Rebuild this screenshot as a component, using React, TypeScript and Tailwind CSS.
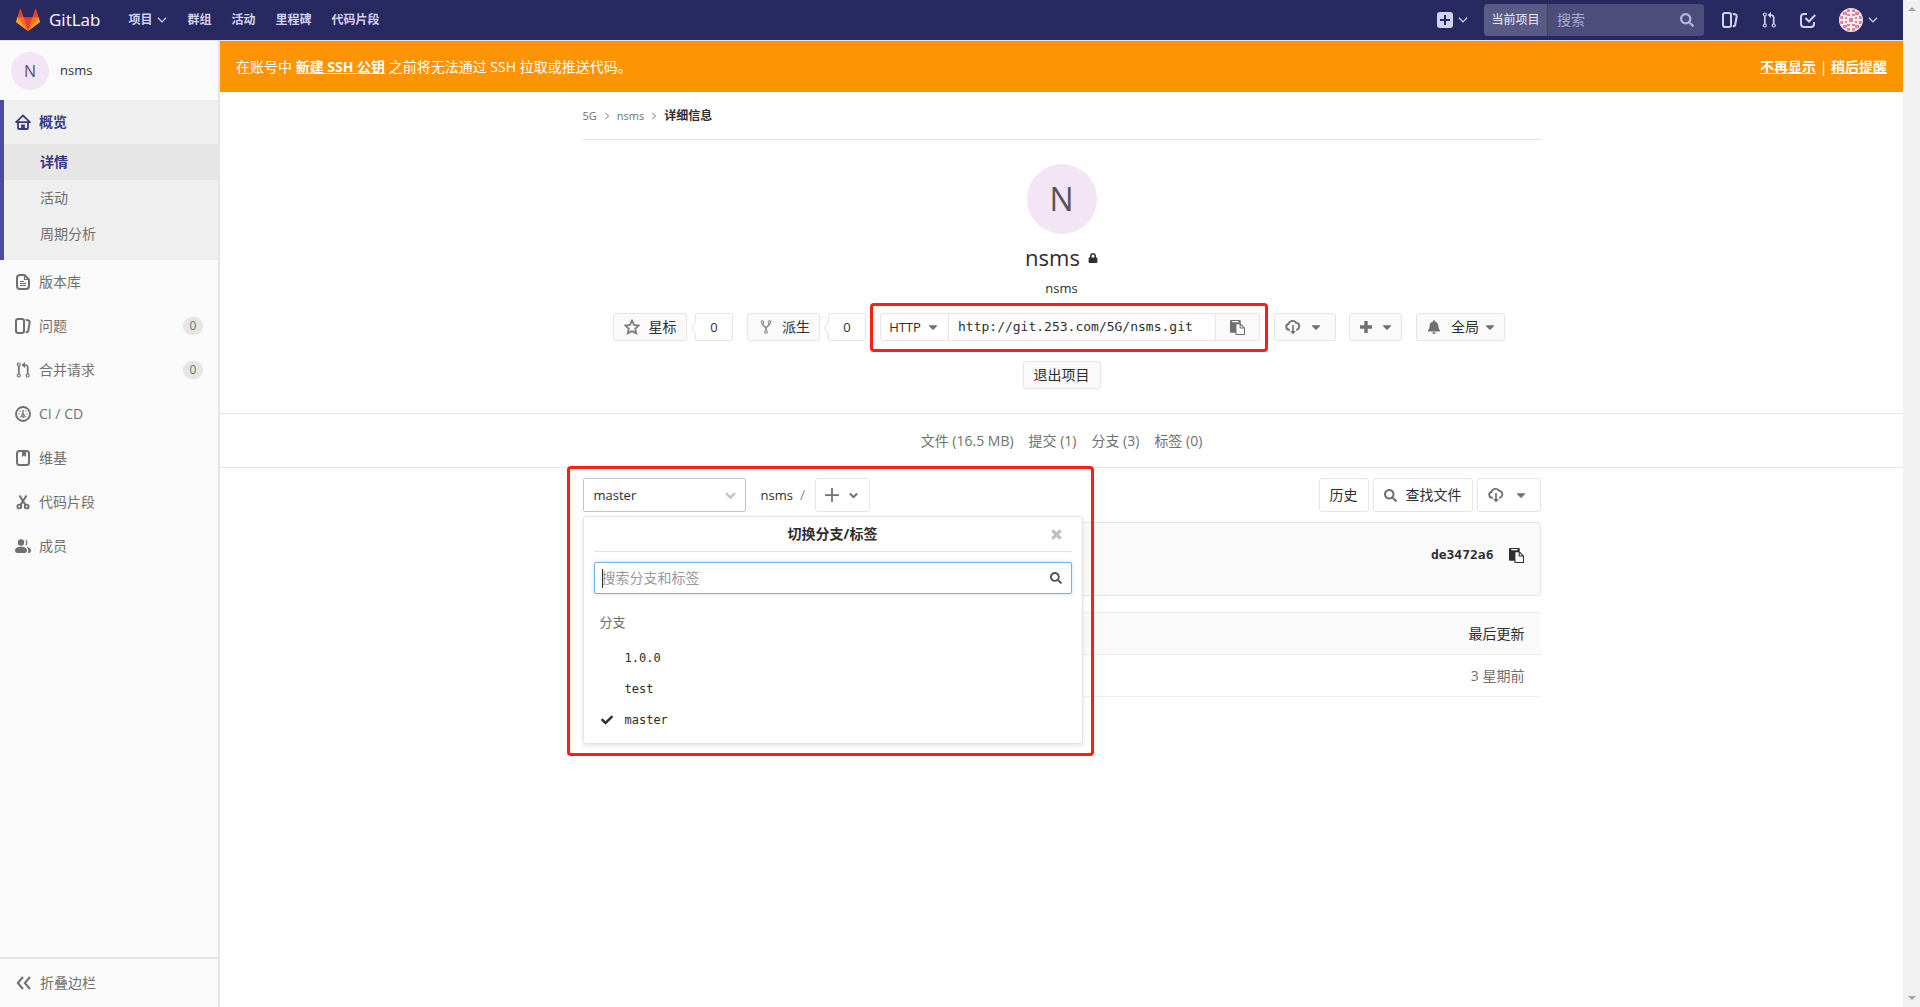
import type { ReactNode } from "react";
import { FaBell, FaCaretDown, FaCheck, FaLock, FaSearch } from "react-icons/fa";

function Svg({ children, className = "size-4" }: { children: ReactNode; className?: string }) {
  return (
    <svg viewBox="0 0 16 16" fill="none" stroke="currentColor" strokeWidth="2" className={className} aria-hidden="true">
      {children}
    </svg>
  );
}

const Chevron = ({ className = "size-[10px]" }: { className?: string }) => (
  <Svg className={className}>
    <path d="M1.500 4.500 8 11l6.500-6.500" />
  </Svg>
);

const BoldChevron = ({ className }: { className: string }) => (
  <Svg className={className}>
    <path d="M1.500 4.500 8 11l6.500-6.500" strokeWidth="3.500" />
  </Svg>
);

const HomeIcon = () => (
  <Svg>
    <path d="M.5 8.700 8 1.500l7.500 7.200M1 8.200h14M3 8.500v5.500a1 1 0 0 0 1 1h8a1 1 0 0 0 1-1V8.500M7 15v-3.500h2V15" strokeWidth="1.800" />
  </Svg>
);

const DocIcon = () => (
  <Svg>
    <path d="M9.500 1H5a3 3 0 0 0-3 3v8a3 3 0 0 0 3 3h6a3 3 0 0 0 3-3V5.500z" strokeLinejoin="round" />
    <path d="M9.500 1v4.500H14M5 7.500h4M5 9.500h6M5 11.500h6" strokeWidth="1.200" />
  </Svg>
);

const IssuesIcon = () => (
  <Svg>
    <g fill="currentColor" stroke="none" fillRule="evenodd">
      <path d="M10.458 15.012l.311.055a3 3 0 0 0 3.476-2.433l1.389-7.879A3 3 0 0 0 13.200 1.280L11.230.933a3.002 3.002 0 0 0-.824-.031c.364.590.580 1.280.593 2.020l1.854.328a1 1 0 0 1 .811 1.158l-1.389 7.879a1 1 0 0 1-1.158.810l-.118-.020a3.980 3.980 0 0 1-.541 1.935z" />
      <path d="M3 0h4a3 3 0 0 1 3 3v10a3 3 0 0 1-3 3H3a3 3 0 0 1-3-3V3a3 3 0 0 1 3-3zm0 2a1 1 0 0 0-1 1v10a1 1 0 0 0 1 1h4a1 1 0 0 0 1-1V3a1 1 0 0 0-1-1H3z" />
    </g>
  </Svg>
);

const MergeIcon = () => (
  <Svg>
    <circle cx="3.800" cy="2.500" r="1.500" strokeWidth="1.200" />
    <circle cx="3.800" cy="13.500" r="1.500" strokeWidth="1.200" />
    <circle cx="12.700" cy="13.500" r="1.500" strokeWidth="1.200" />
    <path d="M3.800 4v8M12.700 12V5.500a2.500 2.500 0 0 0-2.500-2.500H8.500" strokeWidth="1.700" />
    <path d="M10 0v6L6.500 3z" fill="currentColor" stroke="none" />
  </Svg>
);

const GaugeIcon = () => (
  <Svg>
    <circle cx="8" cy="8" r="7" strokeWidth="1.900" />
    <circle cx="8" cy="9.700" r="1.300" strokeWidth="1.400" />
    <path d="M8 4v4.500" strokeWidth="1.400" />
    <path d="M3.300 8h1.200M11.500 8h1.200M4.700 4.700l.8.8M11.300 4.700l-.8.8M4.700 11.300l.8-.8M11.300 11.300l-.8-.8" strokeWidth="1.100" />
  </Svg>
);

const WikiIcon = () => (
  <Svg>
    <rect x="2" y="1" width="12" height="14" rx="2.500" />
    <path d="M7 1h4v6L9 5.400 7 7z" fill="currentColor" stroke="none" />
  </Svg>
);

const ScissorsIcon = () => (
  <Svg>
    <circle cx="4.300" cy="12.500" r="1.900" strokeWidth="1.900" />
    <circle cx="11.700" cy="12.500" r="1.900" strokeWidth="1.900" />
    <path d="M4.500 1.500 10.500 11M11.500 1.500 5.500 11" strokeWidth="2" />
  </Svg>
);

const MembersIcon = () => (
  <Svg>
    <g fill="currentColor" stroke="none">
      <circle cx="6" cy="4.500" r="3.200" />
      <path d="M0 12.500C0 10 2.500 8.700 6 8.700s6 1.300 6 3.800C12 14.500 10.500 15 9 15H3c-1.500 0-3-.5-3-2.500z" />
      <path d="M10 1.500a3.100 3.100 0 0 1 0 6.100 5 5 0 0 0 0-6.100zM11.500 8.700c2.700.3 4.500 1.600 4.500 3.700 0 1.900-1.200 2.600-3.200 2.600.9-2.100.6-4.600-1.300-6.300z" />
    </g>
  </Svg>
);

const TodoIcon = () => (
  <Svg>
    <path d="M7 2H4a3 3 0 0 0-3 3v7a3 3 0 0 0 3 3h7a3 3 0 0 0 3-3v-2" />
    <path d="m5.500 6 3.500 3.500L15.200 3" />
  </Svg>
);

const PlusBoxIcon = () => (
  <Svg>
    <rect width="16" height="16" rx="3" fill="currentColor" stroke="none" />
    <path d="M8 3v10M3 8h10" stroke="#292961" />
  </Svg>
);

const ForkIcon = () => (
  <Svg className="size-[14px]">
    <g strokeWidth="1.200">
      <circle cx="4" cy="2.500" r="1.500" />
      <circle cx="12" cy="2.500" r="1.500" />
      <circle cx="8" cy="13.500" r="1.500" />
      <path d="M4 4c0 3 4 2.800 4 6v2M12 4c0 3-4 2.800-4 6" strokeWidth="1.800" />
    </g>
  </Svg>
);

const StarIcon = () => (
  <Svg>
    <path d="m8 1.700 2 4.200 4.700.6-3.400 3.200.8 4.600L8 12.100l-4.100 2.200.8-4.600L1.300 6.500 6 5.900z" strokeWidth="1.900" />
  </Svg>
);

const CloudDownIcon = () => (
  <Svg>
    <path d="M4.800 10.700H4A2.900 2.900 0 0 1 3.400 5 4.300 4.300 0 0 1 11 3.600a3.700 3.700 0 0 1 1 7.100h-.8" strokeWidth="1.900" />
    <path d="M8 6v7" strokeWidth="1.600" />
    <path d="M5.200 12h5.600L8 15.500z" fill="currentColor" stroke="none" />
  </Svg>
);

const PasteIcon = () => (
  <svg viewBox="0 0 1792 1792" fill="currentColor" className="size-[15px]" aria-hidden="true">
    <path d="M768 1664h896v-640h-416q-40 0-68-28t-28-68v-416h-384v1152zm256-1440v-64q0-13-9.500-22.500t-22.500-9.500h-704q-13 0-22.500 9.500t-9.500 22.500v64q0 13 9.500 22.500t22.500 9.500h704q13 0 22.500-9.500t9.500-22.500zm256 672h299l-299-299v299zm512 128v672q0 40-28 68t-68 28h-960q-40 0-68-28t-28-68v-160h-544q-40 0-68-28t-28-68v-1344q0-40 28-68t68-28h1088q40 0 68 28t28 68v328q21 13 36 28l408 408q28 28 48 76t20 88z" />
  </svg>
);

const Tanuki = () => (
  <svg viewBox="0 0 36 36" className="size-6" aria-hidden="true">
    <path fill="#e24329" d="M2 14l9.380 9v-9l-4-12.280c-.205-.632-1.176-.632-1.380 0z" />
    <path fill="#e24329" d="M34 14l-9.380 9v-9l4-12.280c.205-.632 1.176-.632 1.380 0z" />
    <path fill="#e24329" d="M18 34.380 3 14h30z" />
    <path fill="#fc6d26" d="M18 34.380 11.380 14H2l4 11z" />
    <path fill="#fc6d26" d="M18 34.380 24.620 14H34l-4 11z" />
    <path fill="#fca326" d="M2 14L.1 20.160c-.180.565 0 1.200.5 1.560l17.420 12.660z" />
    <path fill="#fca326" d="M34 14l1.900 6.160c.180.565 0 1.200-.5 1.560L18 34.380z" />
  </svg>
);

const Identicon = () => (
  <svg viewBox="0 0 24 24" className="size-6 rounded-full" aria-hidden="true">
    <rect width="24" height="24" fill="#f9edf1" />
    <g fill="#e4809c">
      <path d="M8 1h3v3H8zM13 1h3v3h-3zM4 4h4v3H4zM16 4h4v3h-4zM1 8h3v3H1zM20 8h3v3h-3zM1 13h3v3H1zM20 13h3v3h-3zM4 17h4v3H4zM16 17h4v3h-4zM8 20h3v3H8zM13 20h3v3h-3z" />
      <path d="M8 6h3v2H8zM13 6h3v2h-3zM6 9h2v2H6zM16 9h2v2h-2zM10 10h4v4h-4zM6 13h2v2H6zM16 13h2v2h-2zM8 16h3v2H8zM13 16h3v2h-3z" />
    </g>
    <circle cx="12" cy="12" r="11.500" fill="none" stroke="#d6d2e4" />
  </svg>
);

function Header() {
  return (
    <header className="flex h-[41px] items-center border-b border-[#e5e5e5] bg-[#292961] pr-[25px] pl-4 text-[#d1d1f0]">
      <a href="#" className="mr-7 flex items-center gap-[9px] text-[17px] text-white">
        <Tanuki />
        GitLab
      </a>
      <nav className="flex items-center gap-5 text-xs font-bold">
        <button className="flex items-center gap-[5px] font-bold">
          项目 <Chevron />
        </button>
        <a href="#">群组</a>
        <a href="#">活动</a>
        <a href="#">里程碑</a>
        <a href="#">代码片段</a>
      </nav>
      <div className="ml-auto flex items-center">
        <button aria-label="新建" className="mr-4 flex items-center gap-[5px]">
          <PlusBoxIcon />
          <Chevron />
        </button>
        <form className="mr-[18px] flex h-8 w-[220px] items-center overflow-hidden rounded bg-[#4d4d7c]">
          <label htmlFor="site-search" className="flex h-8 w-16 shrink-0 items-center justify-center border-r border-[#3b3b8c] bg-[#5a5a87] text-xs text-[#ececf8]">
            当前项目
          </label>
          <input id="site-search" placeholder="搜索" className="min-w-0 flex-1 pl-[9px] text-sm outline-none placeholder:text-[#a9a9d2]" />
          <FaSearch className="mr-[10px] size-[14px] text-[#b5b5d9]" />
        </form>
        <div className="flex items-center gap-[23px]">
          <a href="#" aria-label="问题"><IssuesIcon /></a>
          <a href="#" aria-label="合并请求"><MergeIcon /></a>
          <a href="#" aria-label="待办"><TodoIcon /></a>
          <button aria-label="用户" className="flex items-center gap-[5px]">
            <Identicon />
            <Chevron />
          </button>
        </div>
      </div>
    </header>
  );
}

function NavItem({ icon, label, count }: { icon: ReactNode; label: string; count?: number }) {
  return (
    <a href="#" className="flex h-11 items-center gap-2 px-[15px] text-[#707070]">
      {icon}
      <span>{label}</span>
      {count !== undefined && (
        <span className="ml-auto flex h-[18px] w-5 items-center justify-center rounded-full bg-[#e5e5e5] text-xs">{count}</span>
      )}
    </a>
  );
}

function Sidebar() {
  return (
    <aside className="flex w-[220px] shrink-0 flex-col border-r-2 border-[#e4e4e4] bg-[#fafafa]">
      <a href="#" className="flex h-[59px] items-center gap-[11px] pl-[11px] text-[13px] text-[#2e2e2e]">
        <span className="flex size-[38px] items-center justify-center rounded-full bg-[#f3e5f5] text-base text-[#555]">N</span>
        nsms
      </a>
      <div className="border-l-4 border-[#4b4ba3] bg-[#efefef] pb-2 text-[#707070]">
        <a href="#" className="flex h-11 items-center gap-2 pl-[11px] font-bold text-[#393982]">
          <HomeIcon />
          概览
        </a>
        <a href="#" className="flex h-9 items-center bg-[#e6e6e6] pl-9 font-bold text-[#393982]">详情</a>
        <a href="#" className="flex h-9 items-center pl-9">活动</a>
        <a href="#" className="flex h-9 items-center pl-9">周期分析</a>
      </div>
      <NavItem icon={<DocIcon />} label="版本库" />
      <NavItem icon={<IssuesIcon />} label="问题" count={0} />
      <NavItem icon={<MergeIcon />} label="合并请求" count={0} />
      <NavItem icon={<GaugeIcon />} label="CI / CD" />
      <NavItem icon={<WikiIcon />} label="维基" />
      <NavItem icon={<ScissorsIcon />} label="代码片段" />
      <NavItem icon={<MembersIcon />} label="成员" />
      <button className="mt-auto flex h-[50px] items-center gap-2 border-t-2 border-[#e4e4e4] pl-4 text-[#707070]">
        <Svg>
          <path d="M7 2 1.800 8 7 14M14 2 8.800 8l5.200 6" />
        </Svg>
        折叠边栏
      </button>
    </aside>
  );
}

const grayBtn = "flex h-7 items-center rounded-[3px] border border-[#e5e5e5] bg-[#fafafa]";
const whiteBtn = "flex h-[34px] items-center rounded-[3px] border border-[#e5e5e5] bg-white";
const redFrame = "pointer-events-none absolute z-20 rounded border-[3px] border-[#ff1e14]";

function Count({ value }: { value: number }) {
  return (
    <span className="relative ml-2 flex h-7 w-[38px] items-center justify-center rounded-[2px] border border-[#e5e5e5] bg-white text-[13px]">
      <svg viewBox="0 0 5 14" className="absolute top-[7px] -left-[5px] h-[14px] w-[5px]" aria-hidden="true">
        <path d="M5 0 .7 7 5 14" fill="#fff" stroke="#e0e0e0" />
      </svg>
      {value}
    </span>
  );
}

function ProjectActions() {
  return (
    <div className="mt-[15px] flex justify-center pr-[5px]">
      <button className={`${grayBtn} w-[74px] justify-center gap-[9px]`}>
        <span className="text-[#808080]"><StarIcon /></span>星标
      </button>
      <Count value={0} />
      <button className={`${grayBtn} ml-[14px] w-[73px] justify-end gap-[9px] pr-[9px]`}>
        <span className="text-[#8a8a8a]"><ForkIcon /></span>派生
      </button>
      <Count value={0} />
      <div className="relative ml-[14px] flex h-7">
        <button className="flex w-[69px] items-center justify-center gap-[5px] rounded-l-[3px] border border-[#e5e5e5] text-[13px]">
          HTTP <FaCaretDown className="size-[14px] text-[#707070]" />
        </button>
        <input
          aria-label="项目地址"
          readOnly
          value="http://git.253.com/5G/nsms.git"
          className="w-[266px] border-y border-[#e5e5e5] px-[9px] font-['DejaVu_Sans_Mono','Liberation_Mono',monospace] text-[13px] outline-none"
        />
        <button aria-label="复制地址" className="flex w-[45px] items-center justify-center rounded-r-[3px] border border-[#e5e5e5] bg-[#fafafa] text-[#707070]">
          <PasteIcon />
        </button>
        <div className={`${redFrame} -top-[10px] -right-2 -bottom-[11px] -left-[10px]`} />
      </div>
      <button aria-label="下载" className={`${grayBtn} ml-[14px] w-[62px] gap-2 pl-[10px] text-[#707070]`}>
        <CloudDownIcon />
        <FaCaretDown className="size-[14px]" />
      </button>
      <button aria-label="添加" className={`${grayBtn} ml-[13px] w-[53px] gap-2 pl-[10px] text-[#707070]`}>
        <Svg className="size-3">
          <path d="M8 0v16M0 8h16" strokeWidth="4.500" />
        </Svg>
        <FaCaretDown className="size-[14px]" />
      </button>
      <button className={`${grayBtn} ml-[14px] w-[89px] pl-[10px]`}>
        <FaBell className="mr-[10px] size-[14px] text-[#707070]" />
        全局
        <FaCaretDown className="ml-1 size-[14px] text-[#707070]" />
      </button>
    </div>
  );
}

function BranchMenu() {
  return (
    <div className="absolute top-[38px] left-0 z-10 w-[500px] rounded-[3px] border border-[#e5e5e5] bg-white px-[10px] pb-2 shadow-[0_2px_4px_rgba(0,0,0,0.1)]">
      <div className="relative flex h-[35px] items-center justify-center border-b border-[#e5e5e5] font-bold">
        切换分支/标签
        <button aria-label="关闭" className="absolute top-3 right-[10px] text-[#bfbfbf]">
          <Svg className="size-[11px]">
            <path d="m2 2 12 12M14 2 2 14" strokeWidth="5" />
          </Svg>
        </button>
      </div>
      <div className="relative mt-[10px] flex h-8 items-center rounded-[2px] border border-[#73afea] pr-[9px] shadow-[0_0_4px_rgba(115,175,234,0.4)]">
        <span className="absolute top-[6px] left-[7px] h-[19px] w-px bg-[#2e2e2e]" />
        <input aria-label="搜索分支和标签" placeholder="搜索分支和标签" className="min-w-0 flex-1 pl-[7px] outline-none placeholder:text-[#999]" />
        <FaSearch className="size-3 text-[#555]" />
      </div>
      <div className="mt-[18px] pl-[6px] text-[13px] leading-5 text-[#707070]">分支</div>
      <ul className="mt-[10px] font-['DejaVu_Sans_Mono','Liberation_Mono',monospace] text-xs">
        {["1.0.0", "test", "master"].map((name) => (
          <li key={name}>
            <button className="flex h-[31px] w-full items-center pl-[7px]">
              <span className="w-6">{name === "master" && <FaCheck className="size-3" />}</span>
              {name}
            </button>
          </li>
        ))}
      </ul>
    </div>
  );
}

function TreeHeader() {
  return (
    <div className="relative flex items-center">
      <button className="flex h-[34px] w-[163px] items-center justify-between rounded-[2px] border border-[#c4c4c4] pr-[9px] pl-[10px] text-[13px]">
        master
        <BoldChevron className="size-[11px] text-[#c4c4c4]" />
      </button>
      <a href="#" className="ml-[15px] text-[13px]">nsms</a>
      <span className="ml-[7px] text-[#8f8f8f]">/</span>
      <button aria-label="添加到目录" className={`${whiteBtn} ml-[10px] w-[55px] gap-[10px] pl-[9px] text-[#707070]`}>
        <Svg className="size-[14px]">
          <path d="M8 0v16M0 8h16" />
        </Svg>
        <BoldChevron className="size-[9px]" />
      </button>
      <div className="ml-auto flex gap-1">
        <button className={`${whiteBtn} w-[50px] justify-center`}>历史</button>
        <button className={`${whiteBtn} w-[100px] justify-center gap-[9px]`}>
          <FaSearch className="size-[13px] text-[#707070]" />
          查找文件
        </button>
        <button aria-label="下载源码" className={`${whiteBtn} w-16 gap-[10px] pl-[10px] text-[#707070]`}>
          <CloudDownIcon />
          <FaCaretDown className="size-[14px]" />
        </button>
      </div>
      <BranchMenu />
      <div className={`${redFrame} -top-3 -left-4 h-[290px] w-[527px]`} />
    </div>
  );
}

function Project() {
  return (
    <main className="min-w-0 flex-1">
      <div className="flex h-[51px] items-center justify-between bg-[#fc9403] px-4 text-white">
        <p>
          在账号中 <a href="#" className="font-bold underline">新建 SSH 公钥</a> 之前将无法通过 SSH 拉取或推送代码。
        </p>
        <p>
          <a href="#" className="font-bold underline">不再显示</a> | <a href="#" className="font-bold underline">稍后提醒</a>
        </p>
      </div>
      <div className="mx-auto max-w-[958px]">
        <nav className="flex h-12 items-center gap-[6px] border-b border-[#e5e5e5] text-[11px] text-[#707070]">
          <a href="#">5G</a>
          <Chevron className="size-2 -rotate-90" />
          <a href="#">nsms</a>
          <Chevron className="size-2 -rotate-90" />
          <span className="text-xs font-bold text-[#2e2e2e]">详细信息</span>
        </nav>
      </div>
      <section className="flex flex-col items-center border-b border-[#e5e5e5] py-6">
        <span className="flex size-[70px] items-center justify-center rounded-full bg-[#f3e5f5] text-[32px] text-[#555]">N</span>
        <h1 className="mt-2 flex h-8 items-center gap-2 text-[22px]">
          nsms <FaLock className="size-[10px]" />
        </h1>
        <p className="mt-1 text-[13px] leading-5">nsms</p>
        <ProjectActions />
        <button className={`${grayBtn} mt-5 px-[10px]`}>退出项目</button>
      </section>
      <nav className="flex h-[54px] items-center justify-center gap-[15px] border-b border-[#e5e5e5] text-[#707070]">
        <a href="#">文件 (16.5 MB)</a>
        <a href="#">提交 (1)</a>
        <a href="#">分支 (3)</a>
        <a href="#">标签 (0)</a>
      </nav>
      <section className="mx-auto max-w-[958px] pt-[10px]">
        <TreeHeader />
        <div className="mt-[10px] flex h-[74px] items-center justify-end gap-[15px] rounded-[3px] border border-[#e5e5e5] bg-[#fafafa] pr-4 pb-2">
          <a href="#" className="font-['DejaVu_Sans_Mono','Liberation_Mono',monospace] text-[13px] font-bold">de3472a6</a>
          <button aria-label="复制提交"><PasteIcon /></button>
        </div>
        <table className="mt-4 w-full text-right">
          <thead>
            <tr className="h-[42px] border-y border-[#eee] bg-[#fafafa]">
              <th className="pr-4 font-normal">最后更新</th>
            </tr>
          </thead>
          <tbody>
            <tr className="h-[42px] border-b border-[#eee] text-[#707070]">
              <td className="pr-4">3 星期前</td>
            </tr>
          </tbody>
        </table>
      </section>
    </main>
  );
}

export default function App() {
  return (
    <div className="flex min-h-screen bg-white font-['Open_Sans','Noto_Sans_CJK_SC',sans-serif] text-sm text-[#2e2e2e]">
      <div className="flex min-w-0 flex-1 flex-col">
        <Header />
        <div className="flex flex-1">
          <Sidebar />
          <Project />
        </div>
      </div>
      <div className="flex w-[17px] shrink-0 flex-col items-center justify-between bg-[#f1f1f1] py-[7px]" aria-hidden="true">
        <span className="border-x-4 border-b-4 border-x-transparent border-b-[#a3a3a3]" />
        <span className="border-x-4 border-t-4 border-x-transparent border-t-[#a3a3a3]" />
      </div>
    </div>
  );
}
